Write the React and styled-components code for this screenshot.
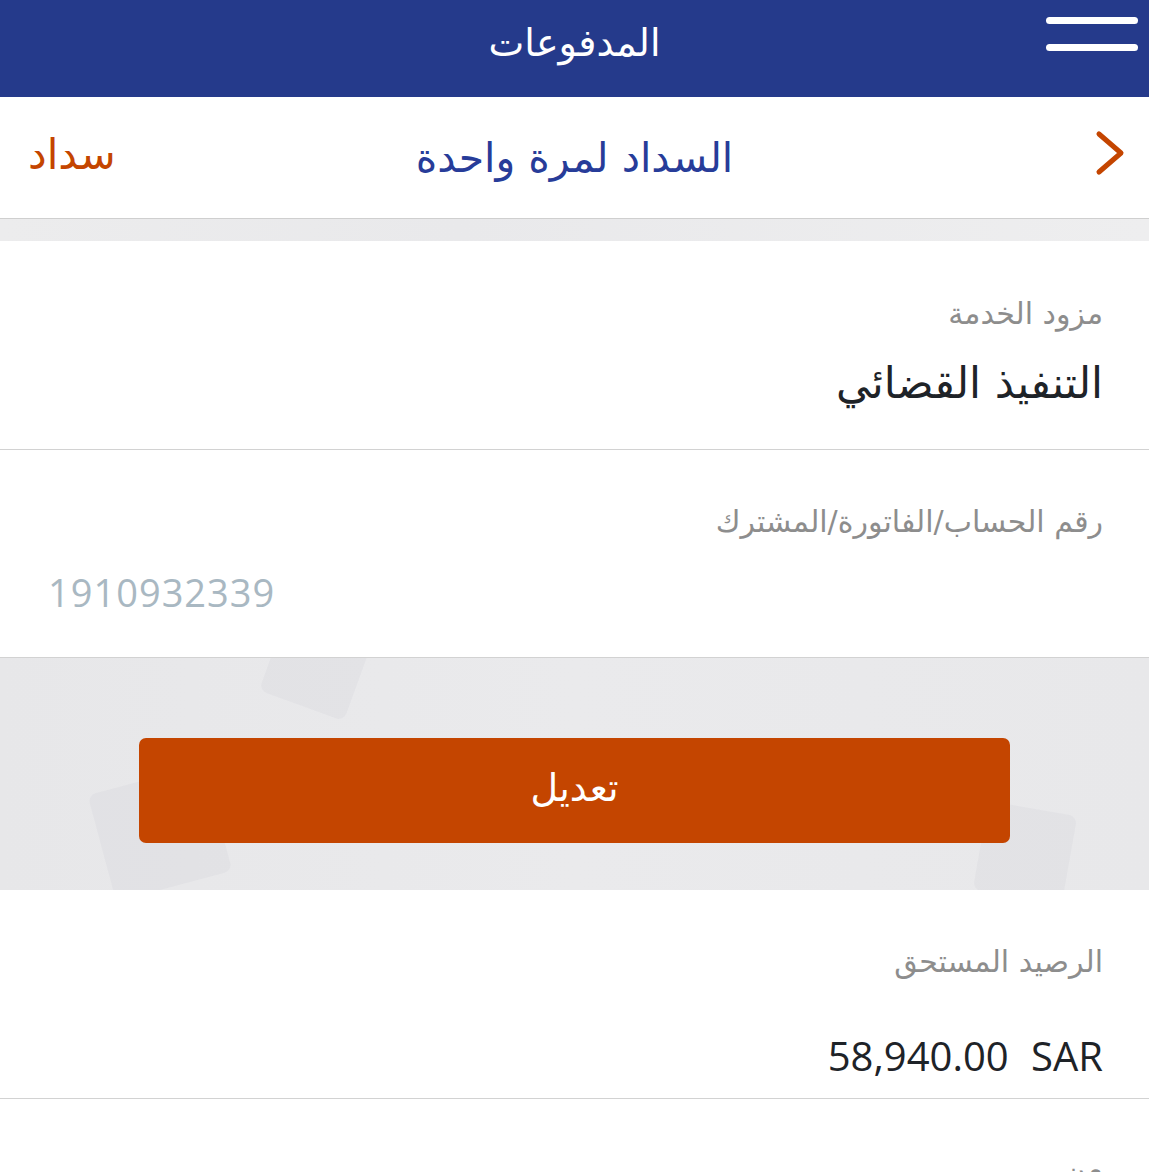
import React from 'react';
import styled, { createGlobalStyle } from 'styled-components';

const GlobalStyle = createGlobalStyle`
  html, body {
    margin: 0;
    padding: 0;
    background: #ffffff;
  }
  body {
    font-family: "DejaVu Sans", "Noto Sans", sans-serif;
  }
`;

const Page = styled.div`
  width: 1149px;
  height: 1172px;
  overflow: hidden;
  direction: rtl;
  background: #ffffff;
`;

const TopBar = styled.header`
  height: 97px;
  background: #253a8b;
  display: flex;
  align-items: center;
  justify-content: center;
  position: relative;
`;

const TopTitle = styled.h1`
  margin: 0;
  color: #ffffff;
  font-size: 38px;
  font-weight: 400;
  padding-bottom: 12px;
`;

const Burger = styled.div`
  position: absolute;
  top: 17px;
  right: 11px;
  width: 92px;
  display: flex;
  flex-direction: column;
  gap: 20px;

  span {
    display: block;
    height: 7px;
    border-radius: 4px;
    background: #ffffff;
  }
`;

const SubBar = styled.div`
  height: 121px;
  border-bottom: 1px solid #cfcfcf;
  display: flex;
  align-items: center;
  justify-content: space-between;
  padding: 0 24px 0 28px;
  position: relative;
`;

const Chevron = styled.div`
  width: 32px;
  display: flex;
  align-items: center;
  margin-top: -10px;
`;

const SubTitle = styled.h2`
  position: absolute;
  left: 0;
  right: 0;
  text-align: center;
  margin: 0;
  color: #273c99;
  font-size: 41px;
  font-weight: 400;
  pointer-events: none;
`;

const PayLink = styled.span`
  color: #c44500;
  font-size: 42px;
  padding-bottom: 6px;
`;

const Strip = styled.div`
  height: ${p => p.h}px;
  background: linear-gradient(90deg, #ececed 0%, #e9e9eb 40%, #eeeeef 100%);
`;

const Field = styled.div`
  height: ${p => p.h}px;
  border-bottom: 1px solid #d2d2d2;
  padding: 0 46px 0 48px;
  display: flex;
  flex-direction: column;
`;

const Label = styled.div`
  color: #8d8d8d;
  font-size: 30px;
  margin-top: ${p => p.top}px;
`;

const Value = styled.div`
  color: #1e2328;
  font-size: 43px;
  margin-top: ${p => p.gap}px;
`;

const NumberValue = styled.div`
  direction: ltr;
  text-align: left;
  color: #a9b8c2;
  font-family: "Open Sans", "Liberation Sans", sans-serif;
  font-size: 38px;
  margin-top: 27px;
  letter-spacing: 1px;
`;

const Amount = styled.div`
  direction: ltr;
  text-align: right;
  color: #1e2328;
  font-family: "Open Sans", "Liberation Sans", sans-serif;
  font-size: 40px;
  margin-top: 49px;
  word-spacing: 12px;
`;

const ButtonArea = styled.div`
  height: 232px;
  box-sizing: border-box;
  padding-top: 80px;
  background: linear-gradient(90deg, #e7e7e9 0%, #eaeaec 50%, #e8e8ea 100%);
  display: flex;
  align-items: flex-start;
  justify-content: center;
  position: relative;
  overflow: hidden;
`;

const Blob = styled.div`
  position: absolute;
  background: rgba(205, 205, 212, 0.22);
  transform: rotate(${p => p.r}deg);
  border-radius: 8px;
`;

const EditButton = styled.button`
  position: relative;
  width: 871px;
  height: 105px;
  border: none;
  border-radius: 7px;
  background: #c44500;
  color: #ffffff;
  font-family: "DejaVu Sans", "Noto Sans", sans-serif;
  font-size: 38px;
  padding-bottom: 6px;
  cursor: pointer;
`;

const NextLabel = styled(Label)`
  margin-top: 52px;
  padding: 0 46px;
`;

export default function App() {
  return (
    <>
      <GlobalStyle />
      <Page>
        <TopBar>
          <TopTitle>المدفوعات</TopTitle>
          <Burger>
            <span />
            <span />
          </Burger>
        </TopBar>

        <SubBar>
          <Chevron>
            <svg width="30" height="46" viewBox="0 0 30 46">
              <path d="M4 4 L26 23 L4 42" fill="none" stroke="#c44500" strokeWidth="5" strokeLinecap="round" strokeLinejoin="round" />
            </svg>
          </Chevron>
          <SubTitle>السداد لمرة واحدة</SubTitle>
          <PayLink>سداد</PayLink>
        </SubBar>

        <Strip h={22} />

        <Field h={208}>
          <Label top={55}>مزود الخدمة</Label>
          <Value gap={27}>التنفيذ القضائي</Value>
        </Field>

        <Field h={207}>
          <Label top={54}>رقم الحساب/الفاتورة/المشترك</Label>
          <NumberValue>1910932339</NumberValue>
        </Field>

        <ButtonArea>
          <Blob r={20} style={{ left: 270, top: -30, width: 90, height: 80 }} />
          <Blob r={-15} style={{ left: 100, top: 120, width: 120, height: 110 }} />
          <Blob r={10} style={{ left: 980, top: 150, width: 90, height: 90 }} />
          <EditButton>تعديل</EditButton>
        </ButtonArea>

        <Field h={208}>
          <Label top={54}>الرصيد المستحق</Label>
          <Amount>58,940.00 SAR</Amount>
        </Field>

        <NextLabel>من</NextLabel>
      </Page>
    </>
  );
}
